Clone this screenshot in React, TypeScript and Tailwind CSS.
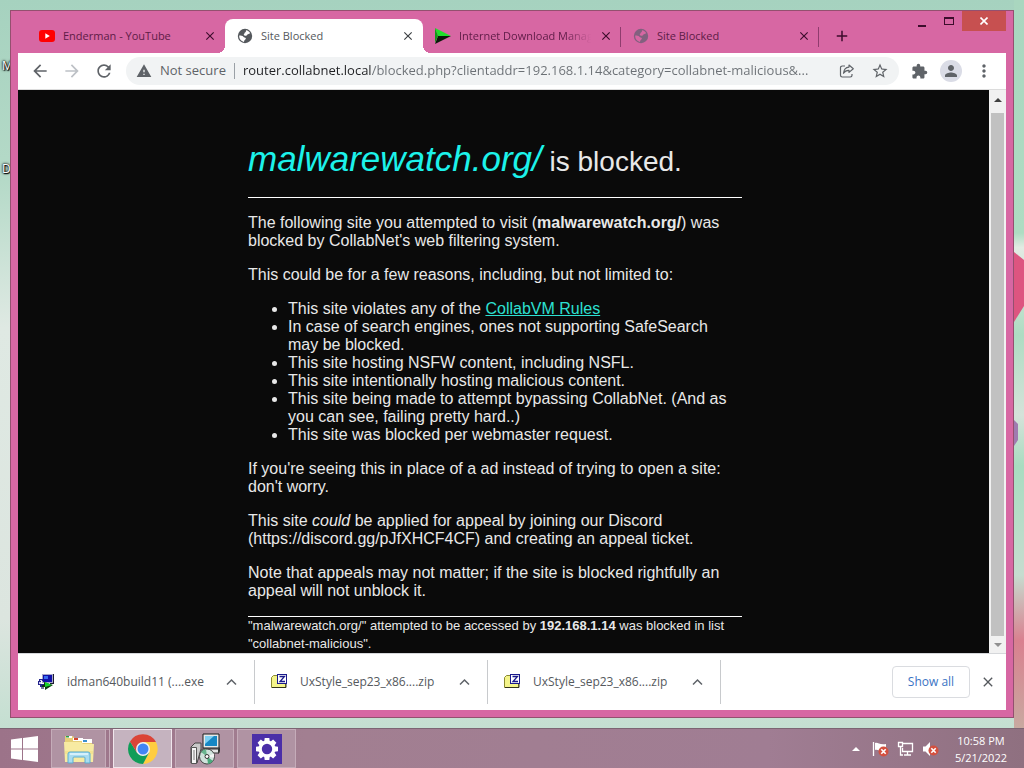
import React from 'react';
import {
  MdAdd,
  MdArrowBack,
  MdArrowForward,
  MdClose,
  MdExtension,
  MdMoreVert,
  MdPerson,
  MdRefresh,
  MdStarBorder,
  MdWarning,
} from 'react-icons/md';

/* ---------- icons ---------- */

const YouTubeIcon = () => (
  <svg viewBox="0 0 16 16" className="w-4 h-4 shrink-0">
    <rect y="2" width="16" height="12" rx="3" fill="#ff0000" />
    <path d="M6.3 5.3v5.4L10.8 8z" fill="#fff" />
  </svg>
);

const GlobeIcon = ({ land }: { land: string }) => (
  <svg viewBox="0 0 16 16" className="w-4 h-4 shrink-0">
    <circle cx="8" cy="8" r="7.200" fill="currentColor" />
    <path
      d="M9 2.300c1.800.3 3.300 1.300 4.200 2.900-.9.1-1.300.9-2.200 1-.9.200-1 1.300-1.900 1.500-1 .2-1.900.1-2.300-.7-.3-.7.600-1 .7-1.800.1-.7.800-.8 1.200-1.200.4-.5.100-1.100.3-1.700z"
      fill={land}
    />
    <path
      d="M2.200 7.600c1.600.1 3.300.2 4.200 1.200.6.700 1.800.6 2.300 1.300.5.800-.2 1.500-.9 1.900-.6.400-.4 1.200-.9 1.900C4.300 13.400 2 11.200 2.200 7.600z"
      fill={land}
    />
  </svg>
);

const IdmIcon = () => (
  <svg viewBox="0 0 16 16" className="w-4 h-4 shrink-0">
    <path d="M0 0l16 8H3z" fill="#1fe02b" />
    <path d="M0 16l16-8H3z" fill="#0a1a0a" />
    <path d="M0 0v15l3-7z" fill="#0f9a18" />
  </svg>
);

const ShareIcon = () => (
  <svg viewBox="0 0 16 16" className="w-4 h-4" fill="none" stroke="#5f6368" strokeWidth="1.200" strokeLinejoin="round">
    <path d="M6 3H3.200A1.700 1.700 0 0 0 1.500 4.700v7.600A1.700 1.700 0 0 0 3.200 14h8.100A1.700 1.700 0 0 0 13 12.300V11" />
    <path d="M10 2L14.300 5.700 10 9.400V7.300C7.500 7.200 5.700 8.200 4.500 10.300 4.800 6.700 6.700 4.400 10 4.100z" />
  </svg>
);

const SetupExeIcon = () => (
  <svg viewBox="0 0 16 16" className="w-4 h-4 shrink-0">
    <path d="M4 0h11v9H4z" fill="#a9a9c8" />
    <path d="M5 1h9v7H5z" fill="#1010a8" />
    <path d="M6 2h4v3H6z" fill="#3c6cf0" />
    <path d="M15 0h1v10h-4V9h3z" fill="#1c1c30" />
    <path d="M1 5h4v2H3v3h3v3H2v-2H0V7h1z" fill="#23238c" />
    <path d="M2 6h2v1H2zM1 8h2v2H1z" fill="#cfcff2" />
    <path d="M6 8l9 3-8 5v-3H4v-2h2z" fill="#0b3a10" />
    <path d="M7 8l7 3-7 2z" fill="#19d52c" />
    <path d="M3 13h3v2H3z" fill="#77779c" />
  </svg>
);

const ZipIcon = () => (
  <svg viewBox="0 0 16 16" className="w-4 h-4 shrink-0">
    <path d="M0.500 3.500l2-2h4v2h8v10h-14z" fill="#f4f48a" stroke="#8a8a30" />
    <path d="M1 13.500h14V10" fill="none" stroke="#33331a" />
    <rect x="6.500" y="0.500" width="9" height="9" fill="#fff" stroke="#1b1b8c" />
    <path d="M8.500 2.500h5L9 7.500h5" fill="none" stroke="#1b1b8c" strokeWidth="1.300" />
  </svg>
);

const WindowsLogo = () => (
  <svg viewBox="0 0 27 26" className="w-[27px] h-[26px]" fill="#fff">
    <path d="M0 3.500L11 2v10.500H0zM12 1.900L27 0v12.500H12zM0 13.500h11V24L0 22.500zM12 13.500h15V26l-15-1.900z" />
  </svg>
);

const ExplorerIcon = () => (
  <svg viewBox="0 0 32 32" className="w-8 h-8">
    <path d="M2 3h8l2 3h17v22H2z" fill="#e6cf78" />
    <path d="M3 3h6v2H3z" fill="#fff" />
    <path d="M3 3h3v1.500H3z" fill="#2f9e4a" />
    <path d="M10 5h10v3H10z" fill="#fff" />
    <path d="M11 5h4v2h-4z" fill="#d4472f" />
    <path d="M19 6h10v4H19z" fill="#fff" />
    <path d="M20 7h4v2h-4z" fill="#3a8fd0" />
    <path d="M1 9h17l2 2h11l-1 18H2z" fill="#f7eaa2" />
    <path d="M2 18h28v3H2z" fill="#f0dc86" opacity="0.600" />
    <path d="M5 30V21q0-2 2-2h18q2 0 2 2v9h-5v-5q0-1-1-1H11q-1 0-1 1v5z" fill="#a9dcf0" stroke="#5aaed2" />
    <path d="M7 21h18" stroke="#e4f7ff" strokeWidth="1.500" />
  </svg>
);

const ChromeIcon = () => (
  <svg viewBox="0 0 32 32" className="w-8 h-8">
    <path d="M16 9h12.990A15 15 0 0 1 16 31l6-11.500z" fill="#ffcd40" />
    <path d="M3.010 8.500A15 15 0 0 0 16 31l6.060-11.500L16 16 9.900 19.500z" fill="#0f9d58" />
    <path d="M3.010 8.500L9.900 19.500 16 9h12.990A15 15 0 0 0 3.010 8.500z" fill="#db4437" />
    <circle cx="16" cy="16" r="7" fill="#f1f1f1" />
    <circle cx="16" cy="16" r="5.500" fill="#4285f4" />
  </svg>
);

const InstallerIcon = () => (
  <svg viewBox="0 0 32 32" className="w-8 h-8">
    <path d="M14 1h16v14H14z" fill="#e8e8e8" stroke="#1c1c1c" />
    <path d="M16 3h12v10H16z" fill="#1787c4" />
    <path d="M16 3h9l-9 8z" fill="#7fd0f2" />
    <path d="M13 16h17v4H13z" fill="#e4e4e4" stroke="#333" />
    <path d="M29 16l2-2v4l-2 3z" fill="#333" />
    <path d="M2 14l4-4h6v6l-4 14H2z" fill="#c9c9c9" stroke="#444" />
    <path d="M2.500 14.500h5v16h-5z" fill="#f6f6f6" stroke="#555" />
    <path d="M4 17h2v10H4z" fill="#b8b8b8" />
    <circle cx="18" cy="23.500" r="7.500" fill="#cfe3dc" stroke="#444" />
    <path d="M18 23.500L12 19a7.500 7.500 0 0 1 5-3z" fill="#69b58f" />
    <path d="M18 23.500l6 4.500a7.500 7.500 0 0 1-5 3z" fill="#4aa97c" />
    <path d="M18 23.500l7-3v4z" fill="#f3f3f3" />
    <circle cx="18" cy="23.500" r="2" fill="#fff" stroke="#333" />
  </svg>
);

const teeth = [0, 45, 90, 135, 180, 225, 270, 315];

const GearIcon = () => (
  <svg viewBox="0 0 30 30" className="w-[30px] h-[30px]">
    <rect width="30" height="30" fill="#4b2fa8" />
    <g fill="#fff">
      {teeth.map((deg) => (
        <path key={deg} d="M12.700 4h4.600l.7 5h-6z" transform={`rotate(${deg} 15 15)`} />
      ))}
    </g>
    <circle cx="15" cy="15" r="6.800" fill="none" stroke="#fff" strokeWidth="3.200" />
  </svg>
);

const RedCross = ({ x, y }: { x: number; y: number }) => (
  <g transform={`translate(${x} ${y})`}>
    <circle cx="4.500" cy="4.500" r="5" fill="#d4503f" />
    <path d="M2.300 2.300l4.400 4.400m0-4.400l-4.400 4.400" stroke="#fff" strokeWidth="1.600" />
  </g>
);

const FlagIcon = () => (
  <svg viewBox="0 0 17 16" className="w-[17px] h-4">
    <path d="M1.500 1v14" stroke="#fff" strokeWidth="1.300" />
    <path d="M3 2c3-1 4 2 11 1v7c-6 1-8-2-11-1z" fill="#fff" />
    <RedCross x={7} y={6} />
  </svg>
);

const NetworkIcon = () => (
  <svg viewBox="0 0 17 16" className="w-[17px] h-4" fill="none" stroke="#fff" strokeWidth="1.300">
    <path d="M6 2.500h9.500v8H5.500V7M10.500 10.500v3M7 14h7" />
    <path d="M1.500 1.500h4v4h-4zM3.500 5.500V14H6" />
  </svg>
);

const VolumeIcon = () => (
  <svg viewBox="0 0 17 16" className="w-[17px] h-4">
    <path d="M1 5.500h2.500L8 1v14l-4.500-4.500H1z" fill="#fff" />
    <RedCross x={7} y={5} />
  </svg>
);

/* ---------- browser ---------- */

interface Tab {
  title: string;
  icon: React.ReactNode;
  active?: boolean;
  divider?: boolean;
}

const tabs: Tab[] = [
  { title: 'Enderman - YouTube', icon: <YouTubeIcon /> },
  { title: 'Site Blocked', icon: <GlobeIcon land="#fff" />, active: true },
  { title: 'Internet Download Manager', icon: <IdmIcon />, divider: true },
  {
    title: 'Site Blocked',
    icon: <span className="shrink-0 text-[#82607f]"><GlobeIcon land="#d767a3" /></span>,
    divider: true,
  },
];

const TabItem: React.FC<Tab> = ({ title, icon, active, divider }) => (
  <div
    className={`relative flex h-[34px] min-w-0 max-w-[198px] flex-1 items-center gap-2 pl-3 pr-2 ${
      active ? 'rounded-t-lg bg-white text-[#54585c]' : 'text-[#5e1c47]'
    }`}
  >
    {active && (
      <>
        <span className="absolute bottom-0 -left-2 h-2 w-2 bg-[radial-gradient(circle_at_0_0,transparent_8px,white_8px)]" />
        <span className="absolute bottom-0 -right-2 h-2 w-2 bg-[radial-gradient(circle_at_100%_0,transparent_8px,white_8px)]" />
      </>
    )}
    {icon}
    <button
      className={`min-w-0 flex-1 overflow-hidden whitespace-nowrap text-left text-[11px] ${
        title.length > 20 ? 'mask-r-from-80%' : ''
      }`}
    >
      {title}
    </button>
    <button aria-label={`Close ${title}`} className={active ? 'text-[#3c4043]' : 'text-[#3d0d2c]'}>
      <MdClose className="h-[14px] w-[14px]" />
    </button>
    {divider && <span className="absolute right-0 top-2 h-5 w-px bg-[#8f3c6e]" />}
  </div>
);

const WindowControls = () => (
  <div className="ml-auto flex h-5 shrink-0 text-[#3d0d2c]">
    <button aria-label="Minimize" className="flex w-[27px] items-end justify-center">
      <span className="mb-1 h-[2px] w-2 bg-current" />
    </button>
    <button aria-label="Maximize" className="flex w-[27px] items-center justify-center">
      <span className="h-2 w-[10px] border border-t-2 border-current" />
    </button>
    <button aria-label="Close" className="flex w-11 items-center justify-center bg-[#c75050] text-white">
      <svg viewBox="0 0 8 8" className="h-2 w-2" stroke="currentColor" strokeWidth="1.600">
        <path d="M0.500 0.500l7 7m0-7l-7 7" />
      </svg>
    </button>
  </div>
);

const TabStrip = () => (
  <div className="flex h-[42px] items-start">
    <div className="flex min-w-0 flex-1 self-end pl-[9px]">
      {tabs.map((tab, i) => (
        <TabItem key={i} {...tab} />
      ))}
      <button aria-label="New tab" className="ml-[14px] text-[#3d0d2c]">
        <MdAdd className="h-[18px] w-[18px]" />
      </button>
    </div>
    <WindowControls />
  </div>
);

const Toolbar = () => (
  <div className="flex h-9 items-center bg-white px-3 text-[#5f6368]">
    <div className="flex shrink-0 gap-3">
      <button aria-label="Back"><MdArrowBack className="h-5 w-5" /></button>
      <button aria-label="Forward" className="text-[#bdc1c6]"><MdArrowForward className="h-5 w-5" /></button>
      <button aria-label="Reload"><MdRefresh className="h-5 w-5" /></button>
    </div>
    <div className="ml-3 flex h-7 min-w-0 flex-1 items-center rounded-full bg-[#f1f3f4] pl-[10px] pr-[10px]">
      <MdWarning className="h-4 w-4 shrink-0" />
      <span className="ml-2 shrink-0 text-[13px]">Not secure</span>
      <span className="mx-2 h-4 w-px shrink-0 bg-[#9aa0a6]" />
      {/* host part is dark, the rest of the address is grey */}
      <input
        aria-label="Address"
        defaultValue="router.collabnet.local/blocked.php?clientaddr=192.168.1.14&category=collabnet-malicious&..."
        className="min-w-0 flex-1 bg-[linear-gradient(to_right,#202124_128px,#6b7075_128px)] bg-clip-text text-[13px] text-transparent outline-none"
      />
      <button aria-label="Share" className="ml-3 shrink-0"><ShareIcon /></button>
      <button aria-label="Bookmark" className="ml-4 shrink-0"><MdStarBorder className="h-[18px] w-[18px]" /></button>
    </div>
    <div className="ml-3 flex shrink-0 items-center">
      <button aria-label="Extensions"><MdExtension className="h-[17px] w-[17px]" /></button>
      <button aria-label="Profile" className="ml-3 flex h-[22px] w-[22px] items-center justify-center rounded-full bg-[#dadce6]">
        <MdPerson className="h-[18px] w-[18px]" />
      </button>
      <button aria-label="Menu" className="ml-3"><MdMoreVert className="h-5 w-5" /></button>
    </div>
  </div>
);

const BlockedPage = () => (
  <main className="min-w-0 flex-1 overflow-hidden bg-[#0a0a0a] pr-[17px] font-['Liberation_Sans',Arial,sans-serif] text-base leading-[18px] text-[#e8e8e8]">
    <div className="mx-auto max-w-[494px] pt-12">
      <h1 className="text-[28px] leading-[42px]">
        <em className="text-[35px] text-[#1cf2ea]">malwarewatch.org/</em> is blocked.
      </h1>
      <hr className="mt-[14px] mb-4 border-white" />
      <p className="mb-4">
        The following site you attempted to visit (<b>malwarewatch.org/</b>) was blocked by CollabNet's web
        filtering system.
      </p>
      <p className="mb-4">This could be for a few reasons, including, but not limited to:</p>
      <ul className="mb-4 list-disc pl-10">
        <li>
          This site violates any of the <a href="#rules" className="text-[#2de0d2] underline">CollabVM Rules</a>
        </li>
        <li>In case of search engines, ones not supporting SafeSearch may be blocked.</li>
        <li>This site hosting NSFW content, including NSFL.</li>
        <li>This site intentionally hosting malicious content.</li>
        <li>This site being made to attempt bypassing CollabNet. (And as you can see, failing pretty hard..)</li>
        <li>This site was blocked per webmaster request.</li>
      </ul>
      <p className="mb-4">If you're seeing this in place of a ad instead of trying to open a site: don't worry.</p>
      <p className="mb-4">
        This site <i>could</i> be applied for appeal by joining our Discord (https://discord.gg/pJfXHCF4CF) and
        creating an appeal ticket.
      </p>
      <p className="mb-4">
        Note that appeals may not matter; if the site is blocked rightfully an appeal will not unblock it.
      </p>
      <hr className="border-white" />
      <p className="text-[13px]">
        "malwarewatch.org/" attempted to be accessed by <b>192.168.1.14</b> was blocked in list
        "collabnet-malicious".
      </p>
    </div>
  </main>
);

const Scrollbar = () => (
  <div className="flex w-[17px] shrink-0 flex-col items-center bg-[#f1f1f1]">
    <button aria-label="Scroll up" className="flex h-[23px] items-center pb-1">
      <svg viewBox="0 0 8 4" className="h-1 w-2"><path d="M0 4l4-4 4 4z" fill="#404040" /></svg>
    </button>
    <div className="w-[13px] flex-1 bg-[#c1c1c1]" />
    <button aria-label="Scroll down" className="flex h-[17px] items-center">
      <svg viewBox="0 0 8 4" className="h-1 w-2"><path d="M0 0l4 4 4-4z" fill="#909090" /></svg>
    </button>
  </div>
);

const downloads = [
  { name: 'idman640build11 (....exe', icon: <SetupExeIcon /> },
  { name: 'UxStyle_sep23_x86....zip', icon: <ZipIcon /> },
  { name: 'UxStyle_sep23_x86....zip', icon: <ZipIcon /> },
];

const DownloadShelf = () => (
  <div className="flex h-[57px] items-center border-t border-[#d5d7da] bg-white pl-1 text-[#55595d]">
    {downloads.map((item, i) => (
      <div key={i} className="flex h-11 w-[233px] min-w-0 items-center border-r border-[#c8cacd] px-4">
        {item.icon}
        <button className="ml-[13px] min-w-0 flex-1 truncate text-left text-xs">{item.name}</button>
        <button aria-label={`Options for ${item.name}`}>
          <svg viewBox="0 0 12 12" className="h-3 w-3" fill="none" stroke="#5f6368" strokeWidth="1.500">
            <path d="M1 8.500L5.500 4l4.500 4.500" />
          </svg>
        </button>
      </div>
    ))}
    <div className="ml-auto flex shrink-0 items-center gap-[10px] pr-[10px]">
      <button className="h-8 w-[78px] rounded border border-[#dadce0] text-xs font-medium text-[#3a73c4]">
        Show all
      </button>
      <button aria-label="Close downloads bar">
        <MdClose className="h-4 w-4" />
      </button>
    </div>
  </div>
);

const BrowserWindow = () => (
  <section className="relative flex min-h-0 flex-1 flex-col border border-[#94506f] bg-[#d767a3] px-[7px] pb-[7px]">
    <TabStrip />
    <Toolbar />
    <div className="flex min-h-0 flex-1 border-t border-[#dcdcdc]">
      <BlockedPage />
      <Scrollbar />
    </div>
    <DownloadShelf />
  </section>
);

/* ---------- desktop ---------- */

const Wallpaper = () => (
  <svg viewBox="0 0 10 728" preserveAspectRatio="none" className="absolute right-0 top-0 h-full w-[10px]">
    <defs>
      <linearGradient id="edge" x1="0" y1="0" x2="0" y2="1">
        <stop offset="0" stopColor="#a9d6bf" />
        <stop offset="0.320" stopColor="#aedcc2" />
        <stop offset="0.340" stopColor="#e2ebe3" />
        <stop offset="0.460" stopColor="#aedcc2" />
        <stop offset="0.570" stopColor="#d5e2d9" />
        <stop offset="0.640" stopColor="#a8dcc0" />
        <stop offset="0.790" stopColor="#c6dccf" />
        <stop offset="0.880" stopColor="#d9808f" />
        <stop offset="1" stopColor="#c8a9a0" />
      </linearGradient>
    </defs>
    <rect width="10" height="728" fill="url(#edge)" />
    <path d="M0 252l10 8v46L0 322z" fill="#dd5580" />
    <path d="M0 420l4 4v16l-4 6z" fill="#a07ab0" />
  </svg>
);

const labelShadow = '[text-shadow:0_0_2px_#000,1px_1px_1px_#000,0_0_3px_#000]';

const DesktopLabels = () => (
  <div className="text-xs text-white">
    <span className={`absolute left-[2px] top-[58px] ${labelShadow}`}>M</span>
    <span className={`absolute left-[2px] top-[161px] ${labelShadow}`}>D</span>
  </div>
);

const taskButton = 'flex h-[39px] items-center justify-center border';

const Taskbar = () => (
  <footer className="flex h-10 shrink-0 items-center border-t border-[#7c6573] bg-[linear-gradient(to_right,#9c7389,#a27f91_30%,#a07d93_75%,#8f7080)] text-white">
    <button aria-label="Start" className="flex w-[51px] items-center pl-[11px]">
      <WindowsLogo />
    </button>
    <div className="flex gap-[3px]">
      <button aria-label="File Explorer" className="flex">
        <span className={`${taskButton} w-[55px] border-[#c5acb9] bg-[#b093a3]`}><ExplorerIcon /></span>
        <span className="h-[39px] w-1 border border-l-0 border-[#c5acb9]" />
      </button>
      <button aria-label="Google Chrome" className={`${taskButton} w-[59px] border-[#f0e6ec] bg-[#c5b3bf]`}>
        <ChromeIcon />
      </button>
      <button aria-label="Setup" className={`${taskButton} w-[59px] border-[#c5acb9] bg-[#b093a3]`}>
        <InstallerIcon />
      </button>
      <button aria-label="Settings" className={`${taskButton} w-[59px] border-[#c5acb9] bg-[#b093a3]`}>
        <GearIcon />
      </button>
    </div>
    <div className="ml-auto flex items-center gap-2 pr-[17px]">
      <button aria-label="Show hidden icons" className="mr-1">
        <svg viewBox="0 0 8 4" className="h-1 w-2"><path d="M0 4l4-4 4 4z" fill="#fff" /></svg>
      </button>
      <button aria-label="Action Center"><FlagIcon /></button>
      <button aria-label="Network"><NetworkIcon /></button>
      <button aria-label="Volume"><VolumeIcon /></button>
      <div className="ml-2 text-center text-[11px] leading-[17px]">
        <div>10:58 PM</div>
        <div>5/21/2022</div>
      </div>
    </div>
  </footer>
);

export default function App() {
  return (
    <div className="flex h-screen flex-col overflow-hidden font-['Open_Sans','Noto_Sans',sans-serif]">
      <div className="relative flex min-h-0 flex-1 bg-[linear-gradient(to_bottom,#a6d2bf,#b5dac8_25%,#dfe9e3_45%,#dce5df_85%,#c4dfd1)] p-[10px]">
        <Wallpaper />
        <DesktopLabels />
        <BrowserWindow />
      </div>
      <Taskbar />
    </div>
  );
}
